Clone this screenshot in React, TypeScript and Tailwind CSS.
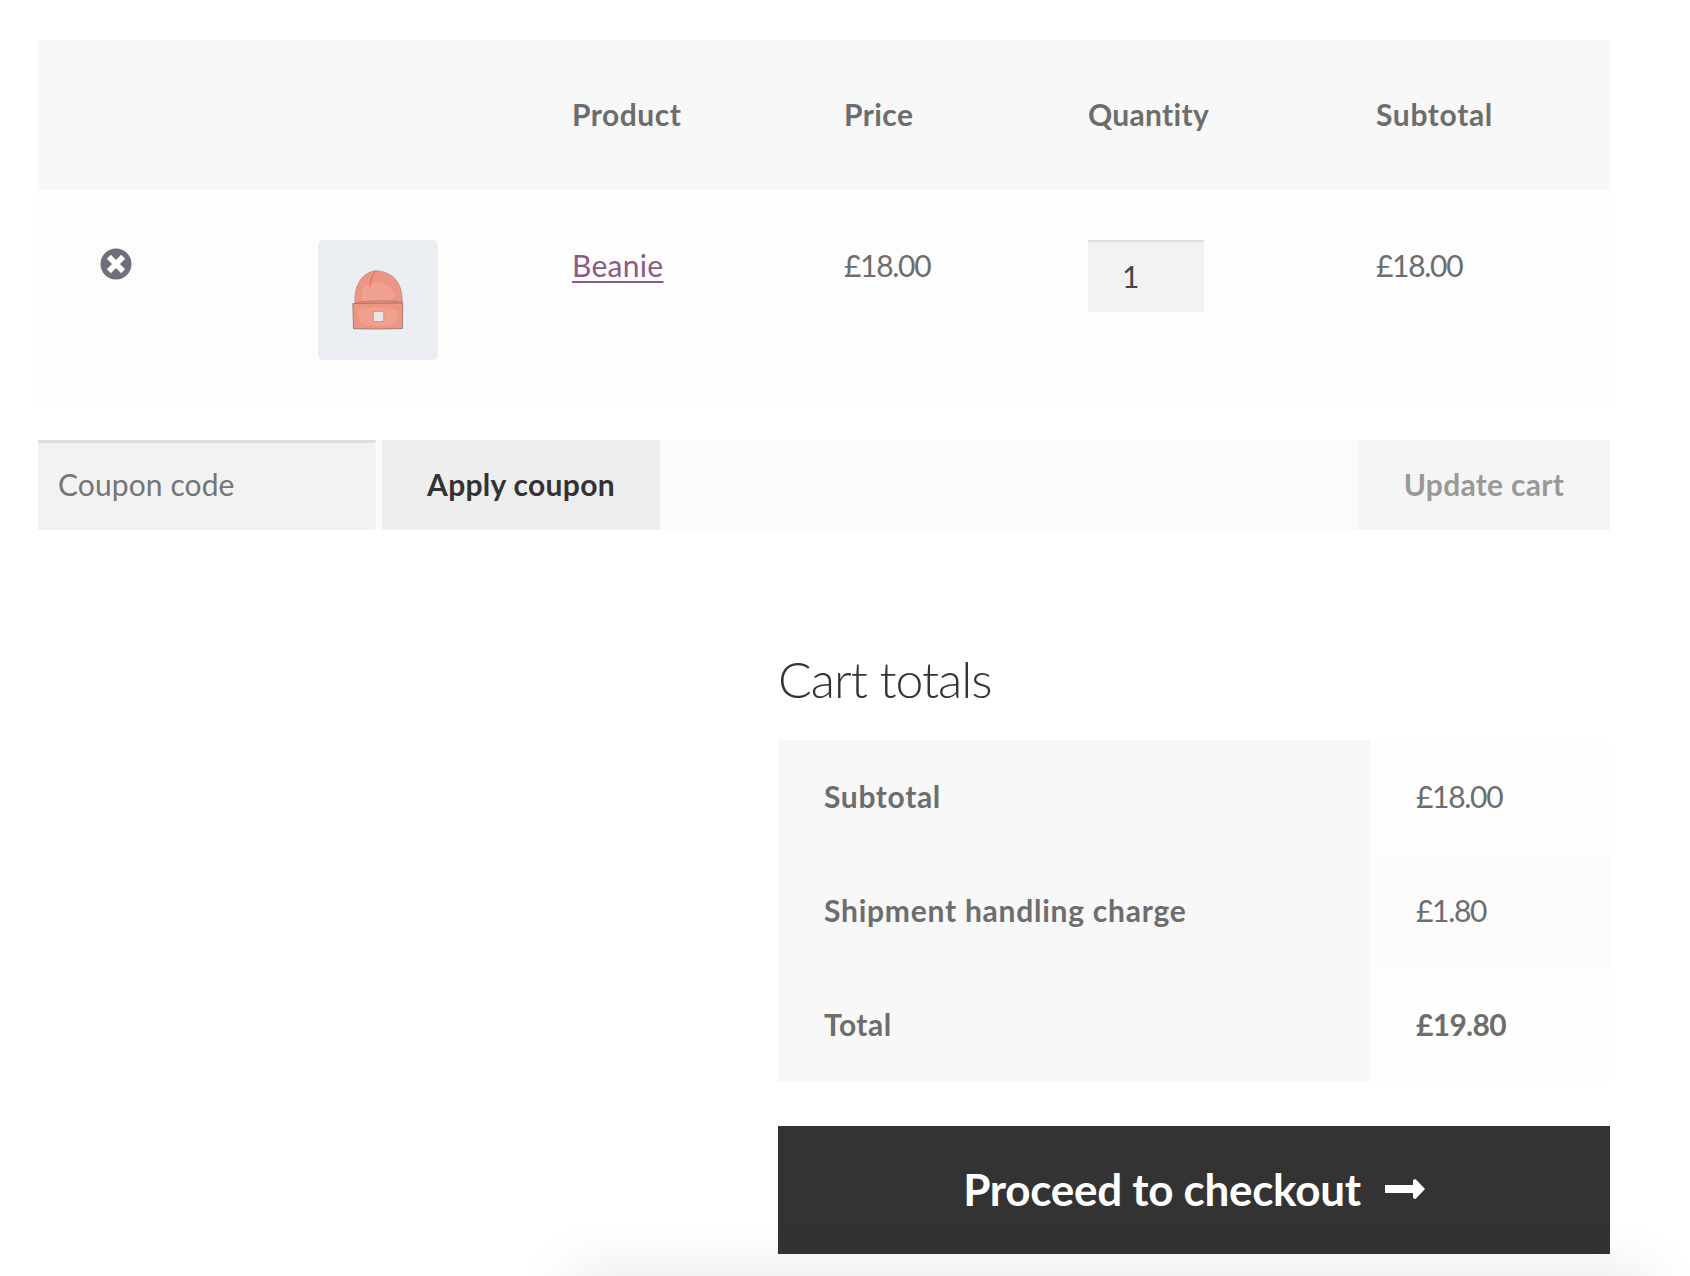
const F = "font-['Lato','Liberation_Sans',sans-serif]";

function RemoveIcon() {
  return (
    <svg viewBox="0 0 32 32" className="w-[32px] h-[32px] block">
      <circle cx="16" cy="16" r="15.5" fill="#6d6f7b" />
      <path d="M10.8 10.8 L21.2 21.2 M21.2 10.8 L10.8 21.2" stroke="#fff" strokeWidth="5.6" strokeLinecap="square" />
    </svg>
  );
}

function Beanie() {
  return (
    <svg viewBox="0 0 80 80" className="w-[80px] h-[80px] block ml-[4px]">
      <defs>
        <filter id="soft" x="-10%" y="-10%" width="120%" height="120%">
          <feGaussianBlur stdDeviation="0.45" />
        </filter>
      </defs>
      <g filter="url(#soft)">
        <path d="M15 43 C14.5 33 16 27 20 20.5 C24 14.5 30 11.5 35 10.7 C45 11 54 15 58 23 C61.5 29 62.5 36 62 43 Z" fill="#ed9583" stroke="#b59084" strokeWidth="0.8" />
        <path d="M22 30 C28 22 40 20 48 26 C54 30 56 36 52 40 C42 43 28 43 22 40 Z" fill="#f3a896" opacity="0.65" />
        <path d="M35 11 C32 15.5 30.5 20 30 27" fill="none" stroke="#d8695a" strokeWidth="1" />
        <path d="M15 42.5 C30 40.5 48 40.5 63 42" fill="none" stroke="#e27464" strokeWidth="1.2" />
        <path d="M12.8 43.5 L62.8 43 L62.5 68.5 C47 69.2 30 69.2 13.5 68.7 Z" fill="#ed9583" stroke="#8d7069" strokeWidth="0.8" />
        <path d="M18 50 C30 46 50 47 58 52 L56 64 C42 67 28 67 20 63 Z" fill="#f3a796" opacity="0.6" />
        <rect x="33.3" y="51.3" width="10.5" height="10.2" fill="#e9e6e3" stroke="#a3958f" strokeWidth="0.7" />
      </g>
    </svg>
  );
}

function Arrow() {
  return (
    <svg viewBox="0 0 40 20" className="w-[40px] h-[20px] block">
      <path d="M0 6 H28 V1 L30.5 0 L40 10 L30.5 20 L28 19 V14 H0 Z" fill="#fff" />
    </svg>
  );
}

const headBase = "font-bold text-[30px] leading-[40px] text-[#6d6d6d]";
const headCls = `${headBase} tracking-[0.5px]`;
const priceCls = "text-[30px] leading-[40px] text-[#6d6d6d] tracking-[-1.3px]";

export default function App() {
  return (
    <div className={`${F} relative w-[1690px] h-[1276px] overflow-hidden bg-white`}>
      <div className="ml-[38px] mr-[80px] pt-[40px]">
        {/* Cart table header */}
        <div className="flex h-[150px] items-center bg-[#f8f8f8] pb-[2px]">
          <div className="w-[534px]" />
          <div className={`w-[272px] ${headCls}`}>Product</div>
          <div className={`w-[244px] ${headBase} tracking-[0.4px]`}>Price</div>
          <div className={`w-[288px] ${headBase} tracking-[0.3px]`}>Quantity</div>
          <div className={`${headBase} tracking-[0.65px]`}>Subtotal</div>
        </div>
        {/* Cart row */}
        <div className="flex h-[218px] items-start bg-[#fdfdfd] pt-[50px]">
          <div className="w-[280px] pl-[62px] pt-[8px]"><RemoveIcon /></div>
          <div className="w-[254px]">
            <div className="w-[120px] h-[120px] rounded-[5px] bg-[#ebeff4] flex items-center justify-center"><Beanie /></div>
          </div>
          <div className="w-[272px] pt-[5px]"><a className="text-[30px] leading-[40px] tracking-[0.3px] text-[#8a5a87] underline decoration-2 underline-offset-[4px]">Beanie</a></div>
          <div className={`w-[244px] pt-[5px] ${priceCls}`}>£18.00</div>
          <div className="w-[288px]">
            <div className="w-[116px] h-[72px] bg-[#f2f2f2] border-t-2 border-t-[#dddddd] border-x border-x-[#efefef] pl-[33px] pt-[14px] text-[30px] leading-[40px] text-[#43454b]">1</div>
          </div>
          <div className={`pt-[5px] ${priceCls}`}>£18.00</div>
        </div>
        {/* Actions */}
        <div className="mt-[32px] flex h-[90px] bg-[#fbfbfb]">
          <div className="w-[338px] bg-[#f2f2f2] border-t-[3px] border-t-[#dddddd] border-r border-r-[#f6f6f6] flex items-center pl-[20px] pb-[4px] text-[30px] text-[#757575] tracking-[0.1px]">Coupon code</div>
          <div className="ml-[6px] w-[278px] bg-[#eeeeee] flex items-center justify-center pb-[2px] font-bold text-[30px] text-[#333333] tracking-[0.3px]">Apply coupon</div>
          <div className="ml-auto w-[252px] bg-[#f5f5f5] flex items-center justify-center pb-[2px] font-bold text-[30px] text-[#999999] tracking-[0.3px]">Update cart</div>
        </div>
        {/* Totals */}
        <div className="ml-[740px] mt-[119px]">
          <div className="text-[50px] leading-[60px] font-light text-[#333333] tracking-[-1px]">Cart totals</div>
          <div className="mt-[31px]">
            <div className="flex h-[114px]">
              <div className={`w-[592px] bg-[#f8f8f8] flex items-center pl-[46px] pb-[2px] ${headBase} tracking-[0.65px]`}>Subtotal</div>
              <div className={`flex-1 bg-[#fefefe] flex items-center pl-[46px] pb-[2px] ${priceCls}`}>£18.00</div>
            </div>
            <div className="flex h-[114px]">
              <div className={`w-[592px] bg-[#f8f8f8] flex items-center pl-[46px] pb-[2px] ${headBase} tracking-[0.75px]`}>Shipment handling charge</div>
              <div className={`flex-1 bg-[#fcfcfc] flex items-center pl-[46px] pb-[2px] ${priceCls}`}>£1.80</div>
            </div>
            <div className="flex h-[114px]">
              <div className={`w-[592px] bg-[#f8f8f8] flex items-center pl-[46px] pb-[2px] ${headCls}`}>Total</div>
              <div className="flex-1 bg-[#fefefe] flex items-center pl-[46px] pb-[2px] font-bold text-[30px] leading-[40px] text-[#6d6d6d] tracking-[-0.7px]">£19.80</div>
            </div>
          </div>
          <div className="mt-[44px] h-[128px] bg-[#333333] flex items-center justify-center gap-[24px] pb-[2px]">
            <span className="font-bold text-[44px] text-white tracking-[-0.3px]">Proceed to checkout</span>
            <Arrow />
          </div>
        </div>
      </div>
      <div className="absolute left-[570px] right-[40px] top-[1276px] h-[40px] shadow-[0_0_60px_rgba(0,0,0,0.12)]" />
    </div>
  );
}
